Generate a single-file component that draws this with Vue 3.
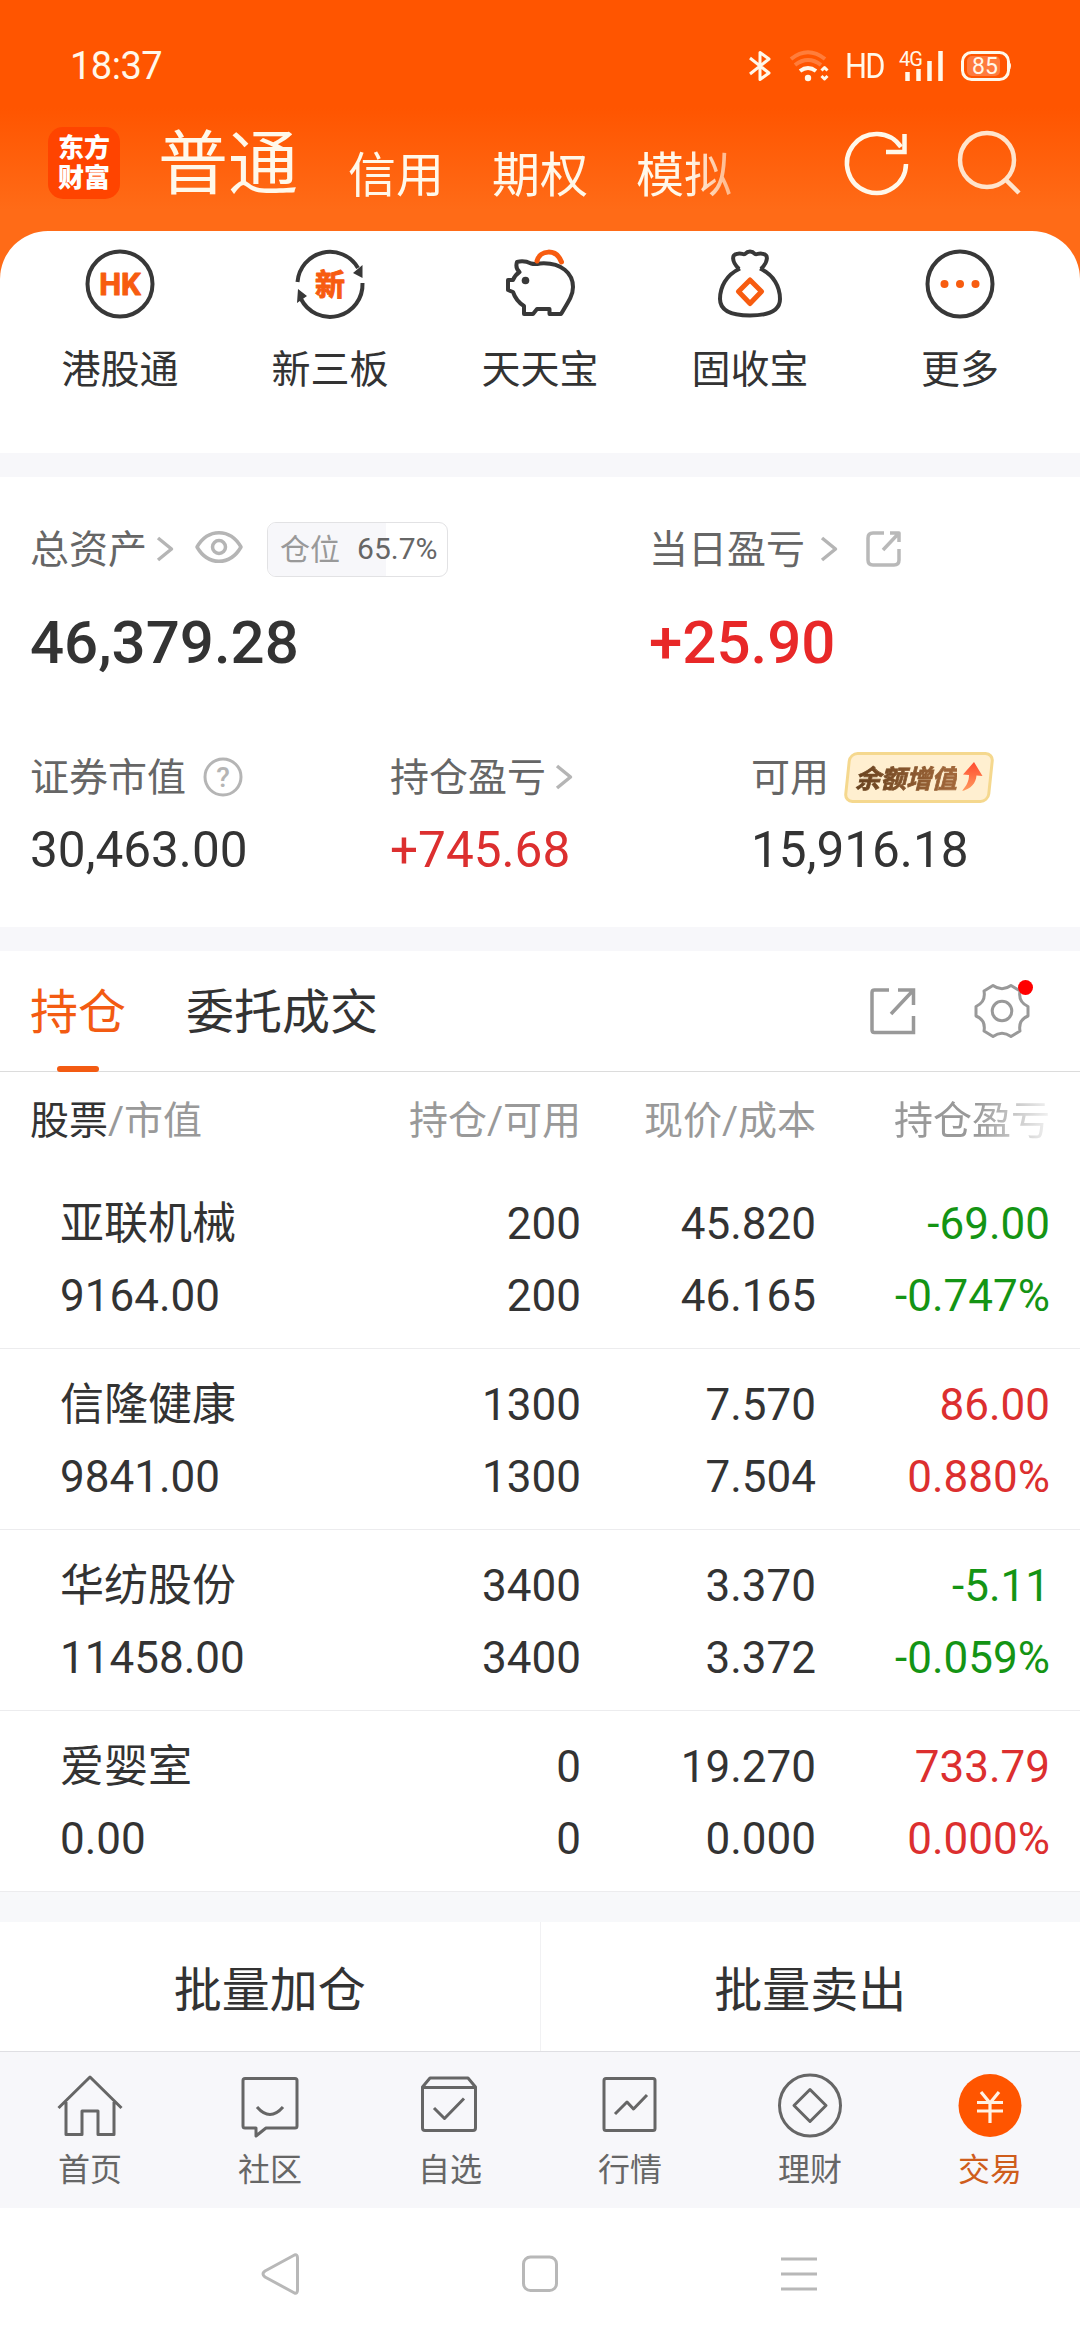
<template>
  <div class="page">
    <header class="top">
      <div class="status">
        <span class="time">18:37</span>
        <div class="status-icons">
          <svg class="bt" width="24" height="32" viewBox="0 0 24 32"><path d="M2 8 L21 23 L12 29.500 V2.500 L21 9 L2 24" /></svg>
          <svg class="wifi" width="42" height="32" viewBox="0 0 42 32">
            <path class="dim" d="M2 9 Q19 -4.500 36 9" />
            <path class="dim" d="M6 15 Q19 5 32 15" />
            <path d="M11 21 Q19 15 27 21" />
            <circle cx="19" cy="28" r="3.200" />
            <path class="thin" d="M32.500 20.500 L35.500 17.500 L38.500 20.500 M32.500 26 L35.500 29 L38.500 26" />
          </svg>
          <span class="hd">HD</span>
          <svg class="signal" width="46" height="32" viewBox="0 0 46 32">
            <text x="0" y="16">4G</text>
            <path d="M8.500 22 V31 M19.500 19 V31 M30.500 11 V31 M41.500 1 V31" />
          </svg>
          <svg class="battery" width="52" height="30" viewBox="0 0 52 30">
            <rect class="level" x="6" y="5" width="33" height="20" rx="5" />
            <rect class="shell" x="1.500" y="1.500" width="46" height="27" rx="9" />
            <path class="cap" d="M48 10 Q52 15 48 20 Z" />
            <text x="24" y="23" text-anchor="middle">85</text>
          </svg>
        </div>
      </div>
      <div class="bar">
        <div class="logo">东方<br />财富</div>
        <nav class="accounts">
          <b>普通</b>
          <span v-for="a in accounts" :key="a">{{ a }}</span>
        </nav>
        <svg class="refresh" width="66" height="66" viewBox="0 0 66 66">
          <path d="M62 34 A29.500 29.500 0 1 1 57 17" />
          <path d="M60.500 4 V22 H42" />
        </svg>
        <svg class="search" width="66" height="66" viewBox="0 0 66 66">
          <circle cx="31" cy="31" r="27" />
          <path d="M50 51 L63 64" />
        </svg>
      </div>
    </header>

    <section class="shortcuts">
      <div v-for="s in shortcuts" :key="s.icon" class="shortcut">
        <svg width="72" height="72" viewBox="0 0 72 72">
          <template v-if="s.icon === 'hk'">
            <circle cx="36" cy="36" r="32.500" />
            <text class="hk" x="36" y="47" text-anchor="middle">HK</text>
          </template>
          <template v-else-if="s.icon === 'new'">
            <path d="M3.500 34 A32.500 32.500 0 0 1 64 20" />
            <path d="M68.500 35 A32.500 32.500 0 0 1 7 51" />
            <path class="solid" d="M68.500 17 V30 L59 25 Z M3 55 L4 41 L13 48 Z" />
            <text class="xin" x="36" y="46.500" text-anchor="middle">新</text>
          </template>
          <template v-else-if="s.icon === 'pig'">
            <path d="M13 14 Q20 12 27 15.500 Q31 16.500 36 15.500 C58 14 69 26 69 39 C69 47 65 53 57 66 H45.500 V61 H33 L29 66 H20 V58 Q12 53 9 44 L4 42 V32 H9 Q11 27 15.500 24 Q11 20 13 14 Z" />
            <circle class="eye" cx="21.500" cy="32.500" r="3.800" />
            <path class="accent" d="M33 13 C36 2 52 0 57.500 14" />
          </template>
          <template v-else-if="s.icon === 'bag'">
            <path d="M25 21 C17 13 18 6 23 6 C27 4.500 29 7 31 6 C34 2.500 38 2.500 41 6 C43 7 45 4.500 49 6 C54 6 55 13 47 21 M26 20.500 C12 27 6 39 6 51 C6 62 17 67.500 36 67.500 C55 67.500 66 62 66 51 C66 39 60 27 46 20.500" />
            <path class="accent" d="M36 32 L47.500 43.500 L36 55.500 L24.500 43.500 Z" />
          </template>
          <template v-else>
            <circle cx="36" cy="36" r="32.500" />
            <circle v-for="x in [20.500, 36, 51.500]" :key="x" class="dot" :cx="x" cy="36" r="4" />
          </template>
        </svg>
        <span>{{ s.label }}</span>
      </div>
    </section>

    <section class="assets">
      <div class="row main">
        <div class="cell">
          <div class="label">
            <span class="name">总资产</span>
            <svg class="arrow a1" width="18" height="28" viewBox="0 0 18 28"><path d="M2 3 L15.500 14 L2 25" /></svg>
            <svg class="eye-icon" width="48" height="34" viewBox="0 0 48 34">
              <path d="M2 17 C13 -2 35 -2 46 17 C35 36 13 36 2 17 Z" />
              <circle cx="24" cy="17" r="6.500" />
            </svg>
            <div class="position">
              <i :style="{ width: position + '%' }"></i>
              <span>仓位</span><em>{{ position }}%</em>
            </div>
          </div>
          <div class="big">46,379.28</div>
        </div>
        <div class="cell">
          <div class="label">
            <span class="name">当日盈亏</span>
            <svg class="arrow a2" width="18" height="28" viewBox="0 0 18 28"><path d="M2 3 L15.500 14 L2 25" /></svg>
            <svg class="share-small" width="36" height="36" viewBox="0 0 36 36">
              <path d="M18 2 H7 Q2 2 2 7 V29 Q2 34 7 34 H28 Q33 34 33 29 V18 M24 2 H33 V11 M33 2 L17 19" />
            </svg>
          </div>
          <div class="big up">+25.90</div>
        </div>
      </div>
      <div class="row sub">
        <div class="cell">
          <div class="label">
            <span class="name">证券市值</span>
            <svg class="help" width="40" height="40" viewBox="0 0 40 40">
              <circle cx="20" cy="20" r="18" />
              <text x="20" y="30" text-anchor="middle">?</text>
            </svg>
          </div>
          <div class="value">30,463.00</div>
        </div>
        <div class="cell">
          <div class="label">
            <span class="name">持仓盈亏</span>
            <svg class="arrow a3" width="18" height="28" viewBox="0 0 18 28"><path d="M2 3 L15.500 14 L2 25" /></svg>
          </div>
          <div class="value up">+745.68</div>
        </div>
        <div class="cell">
          <div class="label">
            <span class="name">可用</span>
            <div class="gain">
              <span>余额增值</span>
              <svg width="22" height="30" viewBox="0 0 22 30">
                <defs>
                  <linearGradient id="gain-arrow" x1="0" y1="0" x2="0" y2="1">
                    <stop offset="0" stop-color="#ff4a2e" />
                    <stop offset="1" stop-color="#ff9a5e" />
                  </linearGradient>
                </defs>
                <path fill="url(#gain-arrow)" d="M13 0 L21.500 14 L15.500 13.500 C15 21 10 27 1 29 C6 23 8 19 8 13 L2 12.500 Z" />
              </svg>
            </div>
          </div>
          <div class="value">15,916.18</div>
        </div>
      </div>
    </section>

    <section class="holdings">
      <div class="tabs">
        <span class="tab active">持仓</span>
        <span class="tab">委托成交</span>
        <svg class="share" width="50" height="48" viewBox="0 0 50 48">
          <path d="M20 3 H5.500 Q3 3 3 5.500 V43 Q3 45.500 5.500 45.500 H44.500 V29 M29 3 H44.500 V18 M44.500 3 L22 27" />
        </svg>
        <div class="gear">
          <svg width="56" height="56" viewBox="0 0 56 56">
            <path d="M19 2.500 Q28 9 37 2.500 L46 8 Q44 19 54 23.500 V33 Q44 37 46 48 L37 53.500 Q28 47 19 53.500 L10 48 Q12 37 2 33 V23.500 Q12 19 10 8 Z" />
            <circle cx="28" cy="28" r="9.800" />
          </svg>
          <i></i>
        </div>
      </div>
      <div class="line head">
        <span><b>股票</b>/市值</span>
        <span>持仓/可用</span>
        <span>现价/成本</span>
        <span class="fade">持仓盈亏</span>
      </div>
      <div v-for="h in holdings" :key="h.name" class="line stock">
        <div>{{ h.name }}<br />{{ h.market }}</div>
        <div>{{ h.held }}<br />{{ h.available }}</div>
        <div>{{ h.price }}<br />{{ h.cost }}</div>
        <div :class="h.profit.startsWith('-') ? 'down' : 'up'">{{ h.profit }}<br />{{ h.rate }}</div>
      </div>
    </section>

    <section class="batch">
      <button>批量加仓</button>
      <button>批量卖出</button>
    </section>

    <nav class="tabbar">
      <div v-for="t in tabs" :key="t.icon" class="item" :class="{ current: t.icon === 'trade' }">
        <svg width="66" height="66" viewBox="0 0 66 66">
          <path v-if="t.icon === 'home'" d="M1.500 35 L33 4 L64.500 35 M9 29 V61.500 H25 V38 H41 V61.500 H57 V29" />
          <template v-else-if="t.icon === 'community'">
            <path d="M8 5.500 H58 Q60 5.500 60 7.500 V53 Q60 55 58 55 H29 L19 63 V55 H8 Q6 55 6 53 V7.500 Q6 5.500 8 5.500 Z" />
            <path d="M20 34 Q33 49 46 34" />
          </template>
          <template v-else-if="t.icon === 'watch'">
            <path d="M5.500 14 L13 5 H51 L58.500 14 V55 Q58.500 57.500 56 57.500 H8 Q5.500 57.500 5.500 55 Z M5.500 14.500 H58.500" />
            <path d="M17 35 L27.500 45.500 L47 25.500" />
          </template>
          <template v-else-if="t.icon === 'market'">
            <rect x="7" y="5.500" width="51" height="52" rx="2" />
            <path d="M18 41 L30 29 L36.500 36 L50 22" />
          </template>
          <template v-else-if="t.icon === 'wealth'">
            <circle cx="33" cy="32.500" r="30.500" />
            <path d="M33 16.500 L49 32.500 L33 48.500 L17 32.500 Z" />
          </template>
          <template v-else>
            <circle class="coin" cx="33" cy="32.500" r="31.500" />
            <path class="yen" d="M24 19 L33 30 L42 19 M20 29.500 H46 M20 38 H46 M33 30 V50" />
          </template>
        </svg>
        <span>{{ t.label }}</span>
      </div>
    </nav>

    <footer class="system">
      <svg width="40" height="44" viewBox="0 0 40 44"><path d="M34.500 3 Q37.500 2 37.500 6 V38 Q37.500 42 34.500 41 L5 25 Q1 22 5 19 Z" /></svg>
      <svg width="40" height="44" viewBox="0 0 40 44"><rect x="3.500" y="5" width="33" height="33.500" rx="7" /></svg>
      <svg width="40" height="44" viewBox="0 0 40 44"><path d="M1 7 H37 M1 22 H37 M1 37 H37" /></svg>
    </footer>
  </div>
</template>

<script setup>
const position = 65.7

const accounts = ['信用', '期权', '模拟']

const shortcuts = [
  { icon: 'hk', label: '港股通' },
  { icon: 'new', label: '新三板' },
  { icon: 'pig', label: '天天宝' },
  { icon: 'bag', label: '固收宝' },
  { icon: 'more', label: '更多' }
]

const holdings = [
  { name: '亚联机械', market: '9164.00', held: 200, available: 200, price: '45.820', cost: '46.165', profit: '-69.00', rate: '-0.747%' },
  { name: '信隆健康', market: '9841.00', held: 1300, available: 1300, price: '7.570', cost: '7.504', profit: '86.00', rate: '0.880%' },
  { name: '华纺股份', market: '11458.00', held: 3400, available: 3400, price: '3.370', cost: '3.372', profit: '-5.11', rate: '-0.059%' },
  { name: '爱婴室', market: '0.00', held: 0, available: 0, price: '19.270', cost: '0.000', profit: '733.79', rate: '0.000%' }
]

const tabs = [
  { icon: 'home', label: '首页' },
  { icon: 'community', label: '社区' },
  { icon: 'watch', label: '自选' },
  { icon: 'market', label: '行情' },
  { icon: 'wealth', label: '理财' },
  { icon: 'trade', label: '交易' }
]
</script>

<style>
body { background: #fff; }
</style>

<style scoped>
.page {
  width: 1080px;
  height: 2340px;
  overflow: hidden;
  background: #fff;
  color: #333;
  font-family: Roboto, "Noto Sans CJK SC", sans-serif;
  font-size: 39px;
  display: flex;
  flex-direction: column;
}
svg {
  display: block;
  flex: none;
  overflow: visible;
  fill: none;
  stroke-linejoin: round;
}
.top {
  height: 279px;
  flex: none;
  background: linear-gradient(#ff5500 0, #ff5500 108px, #ff6b17 210px, #ff6b17 100%);
  color: #fff8ea;
}
.status {
  height: 112px;
  padding: 20px 67px 0 70px;
  box-sizing: border-box;
  display: flex;
  justify-content: space-between;
  align-items: center;
}
.time { font-size: 38px; letter-spacing: -0.5px; }
.status-icons { display: flex; align-items: center; height: 32px; }
.status-icons path { stroke: #fff8ea; stroke-width: 3; }
.wifi { margin-left: 17px; }
.wifi path { stroke-width: 4; }
.wifi .dim { stroke-opacity: 0.25; }
.wifi .thin { stroke-width: 3; }
.wifi circle { fill: #fff8ea; }
.hd { font-size: 35px; margin: 0 16px 0 14px; width: 38px; letter-spacing: -2px; transform: scaleX(0.88); transform-origin: left; }
.signal path { stroke-width: 4.5; }
.signal text { font-size: 20px; fill: #fff8ea; letter-spacing: -1px; }
.battery { margin-left: 16px; }
.battery .level { fill: #ff7a3c; }
.battery .shell { stroke: #fff8ea; stroke-width: 3; }
.battery .cap { fill: #fff8ea; stroke: none; }
.battery text { font-size: 23px; fill: #fff8ea; }

.bar { display: flex; align-items: flex-start; padding: 15px 57px 0 48px; }
.logo {
  width: 72px;
  height: 72px;
  border-radius: 15px;
  background: #ff4400;
  color: #fff;
  font-size: 26px;
  line-height: 30px;
  font-weight: 900;
  text-align: center;
  padding-top: 6px;
  box-sizing: border-box;
}
.accounts {
  width: 685px;
  margin-left: 38px;
  display: flex;
  align-items: baseline;
  gap: 48px;
  line-height: 76px;
  font-size: 48px;
  white-space: nowrap;
  mask-image: linear-gradient(90deg, #000 530px, transparent 625px);
}
.accounts b { font-size: 70px; font-weight: 400; margin-right: 2px; }
.accounts span { position: relative; top: 3px; }
.refresh { margin: 3px 0 0 1px; stroke: #fff8ea; stroke-width: 4.500; stroke-linejoin: miter; }
.search { margin: 2px 0 0 46px; stroke: #ffe4cc; stroke-width: 4.500; }

.shortcuts {
  height: 222px;
  flex: none;
  margin-top: -48px;
  border-radius: 48px 48px 0 0;
  background: #fff;
  padding: 17px 15px 0;
  box-sizing: border-box;
  display: flex;
}
.shortcut {
  width: 210px;
  display: flex;
  flex-direction: column;
  align-items: center;
  gap: 20px;
  line-height: 60px;
}
.shortcut svg { stroke: #383838; stroke-width: 4; }
.shortcut text { fill: #f75c10; stroke: #f75c10; stroke-width: 1; font-weight: 700; }
.shortcut .hk { font-size: 31px; }
.shortcut .xin { font-size: 30px; }
.shortcut .solid, .shortcut .eye { fill: #383838; stroke: none; }
.shortcut .dot { fill: #f75c10; stroke: none; }
.shortcut .accent { stroke: #f75c10; stroke-width: 5; stroke-linecap: round; }

.assets {
  height: 498px;
  flex: none;
  border-top: 24px solid #f7f7fa;
  border-bottom: 24px solid #f7f7fa;
  box-sizing: border-box;
}
.row { display: grid; padding-left: 30px; }
.main { grid-template-columns: 619px 1fr; padding-top: 44px; }
.sub { grid-template-columns: 360px 361px 1fr; padding-top: 68px; }
.label { display: flex; align-items: center; height: 56px; color: #666; white-space: nowrap; }
.name { margin-top: -6px; }
.arrow { stroke: #b5b5b5; stroke-width: 3.500; }
.a1 { margin-left: 9px; }
.a2 { margin-left: 15px; }
.a3 { margin-left: 9px; }
.eye-icon { margin: -4px 0 0 21px; stroke: #b5b5b5; stroke-width: 3.500; }
.position {
  position: relative;
  margin-left: 24px;
  width: 181px;
  height: 55px;
  box-sizing: border-box;
  border: 1px solid #e2e2e4;
  border-radius: 9px;
  overflow: hidden;
  display: flex;
  align-items: center;
  padding: 0 0 2px 12px;
  font-size: 30px;
  color: #999;
}
.position i { position: absolute; left: 0; top: 0; bottom: 0; background: #f7f7fa; }
.position span, .position em { position: relative; font-style: normal; }
.position span { margin-top: -3px; }
.position em { margin-left: 17px; color: #666; }
.share-small { margin-left: 28px; stroke: #b9b9b9; stroke-width: 3.500; }
.big { font-size: 60px; font-weight: 500; line-height: 76px; margin-top: 28px; }
.value { font-size: 49.500px; line-height: 60px; margin-top: 15px; }
.up { color: #dc2f2f; }
.big.up { color: #e82828; }
.down { color: #149414; }
.help { margin-left: 17px; stroke: #b5b5b5; stroke-width: 3; }
.help text { fill: #b5b5b5; stroke: none; font-size: 28px; font-weight: 500; }
.gain {
  position: relative;
  margin-left: 17px;
  width: 146px;
  height: 51px;
  box-sizing: border-box;
  display: flex;
  align-items: center;
  padding-left: 9px;
  gap: 4px;
}
.gain::before {
  content: "";
  position: absolute;
  inset: 0;
  border: 3px solid #f5d88e;
  border-radius: 9px;
  background: #ffefd0;
  transform: skewX(-6deg);
}
.gain span {
  position: relative;
  margin-top: -2px;
  font-size: 25.500px;
  font-weight: 700;
  font-style: italic;
  background: linear-gradient(90deg, #68421f, #a3683a);
  background-clip: text;
  color: transparent;
  -webkit-text-stroke: 0.8px transparent;
}
.gain svg { position: relative; }

.tabs {
  height: 121px;
  box-sizing: border-box;
  border-bottom: 1px solid #dcdcdc;
  padding: 0 50px 0 30px;
  display: flex;
  align-items: center;
  font-size: 48px;
}
.tab { position: relative; line-height: 120px; margin-right: 60px; padding-top: 3px; }
.active { color: #f35b12; }
.active::after {
  content: "";
  position: absolute;
  left: 27px;
  bottom: 1px;
  width: 42px;
  height: 6px;
  border-radius: 3px;
  background: #f35b12;
}
.share { margin-left: auto; stroke: #999; stroke-width: 3.500; stroke-linejoin: miter; }
.gear { position: relative; margin-left: 55px; }
.gear svg { stroke: #999; stroke-width: 3; }
.gear i { position: absolute; right: -3px; top: -3px; width: 15px; height: 15px; border-radius: 50%; background: #f00; }

.line {
  display: grid;
  grid-template-columns: 31px 250px 300px 235px 234px;
  text-align: right;
}
.line > :first-child { grid-column: 1 / 3; text-align: left; }
.head { height: 96px; line-height: 99px; color: #999; }
.head > :first-child { padding-left: 30px; }
.head b { font-weight: 400; color: #333; }
.fade { mask-image: linear-gradient(90deg, #000 160px, transparent 245px); }
.stock {
  height: 181px;
  box-sizing: border-box;
  border-bottom: 1px solid #ececee;
  padding-top: 20px;
  font-size: 44px;
  line-height: 72px;
}
.stock > :first-child { padding-left: 60px; }

.batch {
  height: 160px;
  flex: none;
  box-sizing: border-box;
  border-top: 30px solid #f7f8fa;
  border-bottom: 1px solid #dfdfe3;
  display: flex;
}
.batch button {
  flex: 1;
  border: none;
  background: none;
  padding: 0 0 2px;
  color: #333;
  font: inherit;
  font-size: 48px;
}
.batch button + button { border-left: 1px solid #f1f1f3; }

.tabbar { height: 156px; flex: none; background: #f7f7fa; display: flex; }
.item {
  width: 180px;
  display: flex;
  flex-direction: column;
  align-items: center;
  padding-top: 21px;
  gap: 11px;
  font-size: 32px;
  line-height: 40px;
  color: #666;
}
.item svg { stroke: #666; stroke-width: 3; }
.current { color: #cf5d1c; }
.item .coin { fill: #ff5500; stroke: none; }
.item .yen { stroke: #fff1e4; stroke-width: 3.200; }

.system {
  height: 132px;
  flex: none;
  padding: 0 260px;
  display: flex;
  align-items: center;
  justify-content: space-between;
}
.system svg { stroke: #b8b8b8; stroke-width: 3; }
</style>
